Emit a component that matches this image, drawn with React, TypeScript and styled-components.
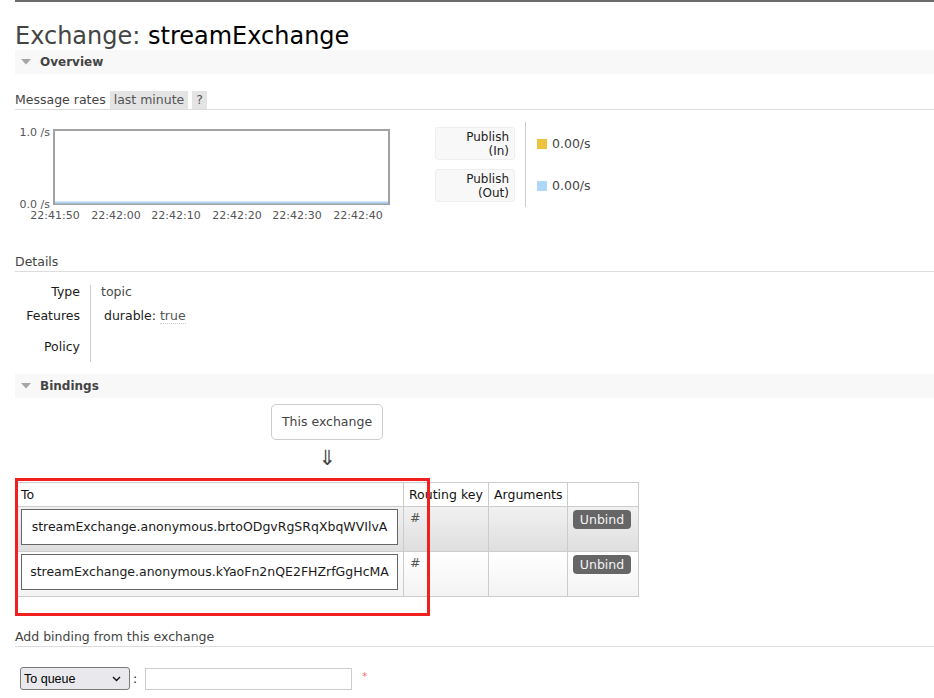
import React from 'react';
import styled, { createGlobalStyle } from 'styled-components';

const GlobalStyle = createGlobalStyle`
  html, body { margin: 0; padding: 0; background: #fff; }
  body {
    font-family: "DejaVu Sans", Verdana, sans-serif;
    font-size: 12.5px;
    color: #484848;
  }
  * { box-sizing: border-box; }
`;

const Page = styled.div`
  width: 934px;
  padding-left: 15px;
  overflow: hidden;
`;

const TopRule = styled.div`
  height: 2px;
  background: #6a6a6a;
`;

const Title = styled.h1`
  margin: 21px 0 0;
  font-size: 24px;
  font-weight: normal;
  line-height: 27px;
  color: #444;
  white-space: nowrap;
`;

const TitleName = styled.span`
  color: #000;
`;

const SectionBar = styled.div<{ $mt?: number }>`
  height: 24px;
  background: #f8f8f8;
  display: flex;
  align-items: center;
  padding-left: 6px;
  gap: 9px;
  font-size: 12px;
  font-weight: bold;
  color: #444;
  margin-top: ${(p) => p.$mt ?? 0}px;
`;

const RatesHeader = styled.div`
  margin-top: 17px;
  height: 19px;
  display: flex;
  align-items: flex-start;
  border-bottom: 1px solid #ddd;
  color: #444;
`;

const RatesLabel = styled.span`
  line-height: 18px;
`;

const Pill = styled.span`
  margin-left: 4px;
  height: 18px;
  line-height: 18px;
  padding: 0 4px;
  background: #e4e4e4;
  color: #555;
`;

const ChartRow = styled.div`
  margin-top: 12px;
  height: 100px;
  display: flex;
  align-items: flex-start;
`;

const Legend = styled.div`
  margin-left: 35px;
  display: flex;
`;

const LegendKeys = styled.div`
  display: flex;
  flex-direction: column;
  gap: 9px;
  padding: 5px 10px 5px 0;
  border-right: 1px solid #ccc;
`;

const LegendKey = styled.div`
  width: 80px;
  height: 33px;
  background: #f8f8f8;
  border: 1px solid #eee;
  border-radius: 3px;
  padding-right: 5px;
  display: flex;
  flex-direction: column;
  justify-content: center;
  align-items: flex-end;
  font-size: 12px;
  line-height: 14px;
  white-space: nowrap;
  color: #222;
`;

const LegendValues = styled.div`
  display: flex;
  flex-direction: column;
  gap: 9px;
  padding: 5px 0 5px 11px;
`;

const LegendValue = styled.div`
  height: 33px;
  display: flex;
  align-items: center;
  gap: 5px;
  color: #444;
`;

const Swatch = styled.span<{ $c: string }>`
  width: 10px;
  height: 10px;
  background: ${(p) => p.$c};
`;

const SubHeading = styled.div<{ $mt: number }>`
  margin-top: ${(p) => p.$mt}px;
  height: 19px;
  line-height: 18px;
  border-bottom: 1px solid #ddd;
  color: #444;
`;

const DetailsGrid = styled.div`
  margin-top: 13px;
  display: grid;
  grid-template-columns: 76px auto;
  grid-template-rows: 24px 31px 22px;
  line-height: 14px;
`;

const DetailLabel = styled.div`
  text-align: right;
  padding-right: 10px;
  border-right: 1px solid #ccc;
  color: #1a1a1a;
`;

const DetailValue = styled.div<{ $indent?: number }>`
  padding-left: ${(p) => 10 + (p.$indent ?? 0)}px;
  color: #484848;
`;

const Strong = styled.span`
  color: #222;
`;

const Abbr = styled.span`
  border-bottom: 1px dotted #ccc;
  color: #555;
`;

const BindingsArea = styled.div`
  margin-top: 6px;
  display: inline-flex;
  flex-direction: column;
  align-items: center;
`;

const ExchangeBox = styled.div`
  height: 36px;
  line-height: 34px;
  padding: 0 10px;
  border: 1px solid #ccc;
  border-radius: 5px;
  color: #444;
`;

const ArrowLine = styled.div`
  height: 42px;
  line-height: 36px;
  font-size: 21px;
  color: #444;
`;

const TableWrap = styled.div`
  position: relative;
`;

const Table = styled.table`
  border-collapse: collapse;
  width: 623px;
  table-layout: fixed;
`;

const Th = styled.th<{ $w: number }>`
  width: ${(p) => p.$w}px;
  height: 24px;
  border: 1px solid #ccc;
  padding: 0 5px;
  font-weight: normal;
  text-align: left;
  color: #111;
  white-space: nowrap;
  background: #fff;
`;

const Tr = styled.tr<{ $alt: boolean }>`
  background: ${(p) =>
    p.$alt
      ? 'linear-gradient(#f1f1f1, #dedede)'
      : 'linear-gradient(#ffffff, #f3f3f3)'};
`;

const Td = styled.td<{ $pad?: string }>`
  border: 1px solid #ccc;
  vertical-align: top;
  padding: ${(p) => p.$pad ?? '4px 6px'};
  color: #555;
  line-height: 14px;
`;

const ToBox = styled.div`
  height: 36px;
  line-height: 34px;
  border: 1px solid #666;
  background: #fff;
  text-align: center;
  white-space: nowrap;
  color: #1a1a1a;
`;

const UnbindButton = styled.button`
  width: 58px;
  height: 19px;
  padding: 0;
  border: none;
  border-radius: 4px;
  background: #666;
  color: #f4f4f4;
  font-family: "DejaVu Sans", Verdana, sans-serif;
  font-size: 12.5px;
  line-height: 19px;
`;

const Annotation = styled.div`
  position: absolute;
  left: 0;
  top: -4px;
  width: 415px;
  height: 138px;
  border: 3px solid #f0201e;
  pointer-events: none;
`;

const FormRow = styled.div`
  margin-top: 20px;
  padding-left: 5px;
  display: flex;
  align-items: center;
`;

const SelectWrap = styled.div`
  position: relative;
  width: 110px;
  height: 23px;
`;

const Select = styled.select`
  appearance: none;
  width: 110px;
  height: 23px;
  padding: 0 0 0 3px;
  background: #e9e9ed;
  border: 1px solid #7a7a7a;
  border-radius: 3px;
  font-family: "Liberation Sans", Arial, sans-serif;
  font-size: 12.5px;
  color: #000;
`;

const Chevron = styled.svg`
  position: absolute;
  right: 9px;
  top: 9px;
  pointer-events: none;
`;

const Colon = styled.span`
  margin-left: 3px;
  color: #222;
`;

const TextInput = styled.input`
  margin-left: 8px;
  width: 207px;
  height: 22px;
  border: 1px solid #ccc;
  padding: 0 4px;
`;

const Required = styled.span`
  margin-left: 10px;
  margin-top: -4px;
  font-size: 10px;
  color: #f66;
`;

const Triangle = () => (
  <svg width="10" height="6" viewBox="0 0 10 6">
    <polygon points="0,0 10,0 5,5.5" fill="#a6a6a6" />
  </svg>
);

const ticks = [
  { x: 40, t: '22:41:50' },
  { x: 101, t: '22:42:00' },
  { x: 161, t: '22:42:10' },
  { x: 222, t: '22:42:20' },
  { x: 282, t: '22:42:30' },
  { x: 343, t: '22:42:40' },
];

const Chart = () => (
  <svg width="385" height="100" viewBox="0 0 385 100">
    <rect x="39" y="8" width="335" height="74" fill="#fff" stroke="#a2a2a2" strokeWidth="2" />
    <rect x="40" y="79.5" width="333" height="2" fill="#b0d4f1" />
    <g fontFamily='"DejaVu Sans", Verdana, sans-serif' fontSize="11" fill="#545454">
      <text x="35" y="14" textAnchor="end">1.0 /s</text>
      <text x="35" y="86" textAnchor="end">0.0 /s</text>
      {ticks.map((k) => (
        <text key={k.t} x={k.x} y="97" textAnchor="middle">
          {k.t}
        </text>
      ))}
    </g>
  </svg>
);

const bindings = [
  'streamExchange.anonymous.brtoODgvRgSRqXbqWVIlvA',
  'streamExchange.anonymous.kYaoFn2nQE2FHZrfGgHcMA',
];

export default function App() {
  return (
    <>
      <GlobalStyle />
      <Page>
        <TopRule />
        <Title>
          Exchange: <TitleName>streamExchange</TitleName>
        </Title>

        <SectionBar>
          <Triangle />
          <span>Overview</span>
        </SectionBar>

        <RatesHeader>
          <RatesLabel>Message rates</RatesLabel>
          <Pill>last minute</Pill>
          <Pill>?</Pill>
        </RatesHeader>

        <ChartRow>
          <Chart />
          <Legend>
            <LegendKeys>
              <LegendKey>
                <span>Publish</span>
                <span>(In)</span>
              </LegendKey>
              <LegendKey>
                <span>Publish</span>
                <span>(Out)</span>
              </LegendKey>
            </LegendKeys>
            <LegendValues>
              <LegendValue>
                <Swatch $c="#edc240" />
                <span>0.00/s</span>
              </LegendValue>
              <LegendValue>
                <Swatch $c="#afd8f8" />
                <span>0.00/s</span>
              </LegendValue>
            </LegendValues>
          </Legend>
        </ChartRow>

        <SubHeading $mt={31}>Details</SubHeading>
        <DetailsGrid>
          <DetailLabel>Type</DetailLabel>
          <DetailValue>topic</DetailValue>
          <DetailLabel>Features</DetailLabel>
          <DetailValue $indent={3}>
            <Strong>durable:</Strong> <Abbr>true</Abbr>
          </DetailValue>
          <DetailLabel>Policy</DetailLabel>
          <DetailValue />
        </DetailsGrid>

        <SectionBar $mt={12}>
          <Triangle />
          <span>Bindings</span>
        </SectionBar>

        <BindingsArea>
          <ExchangeBox>This exchange</ExchangeBox>
          <ArrowLine>⇓</ArrowLine>
          <TableWrap>
            <Table>
              <thead>
                <tr>
                  <Th $w={388}>To</Th>
                  <Th $w={85}>Routing key</Th>
                  <Th $w={79}>Arguments</Th>
                  <Th $w={71}></Th>
                </tr>
              </thead>
              <tbody>
                {bindings.map((b, i) => (
                  <Tr key={b} $alt={i % 2 === 0}>
                    <Td $pad="2px 5px 6px 5px">
                      <ToBox>{b}</ToBox>
                    </Td>
                    <Td>#</Td>
                    <Td></Td>
                    <Td $pad="3px 5px">
                      <UnbindButton>Unbind</UnbindButton>
                    </Td>
                  </Tr>
                ))}
              </tbody>
            </Table>
            <Annotation />
          </TableWrap>
        </BindingsArea>

        <SubHeading $mt={31}>Add binding from this exchange</SubHeading>
        <FormRow>
          <SelectWrap>
            <Select defaultValue="queue">
              <option value="queue">To queue</option>
              <option value="exchange">To exchange</option>
            </Select>
            <Chevron width="9" height="6" viewBox="0 0 9 6">
              <polyline points="1,1 4.5,4.5 8,1" fill="none" stroke="#111" strokeWidth="1.4" />
            </Chevron>
          </SelectWrap>
          <Colon>:</Colon>
          <TextInput type="text" />
          <Required>*</Required>
        </FormRow>
      </Page>
    </>
  );
}
